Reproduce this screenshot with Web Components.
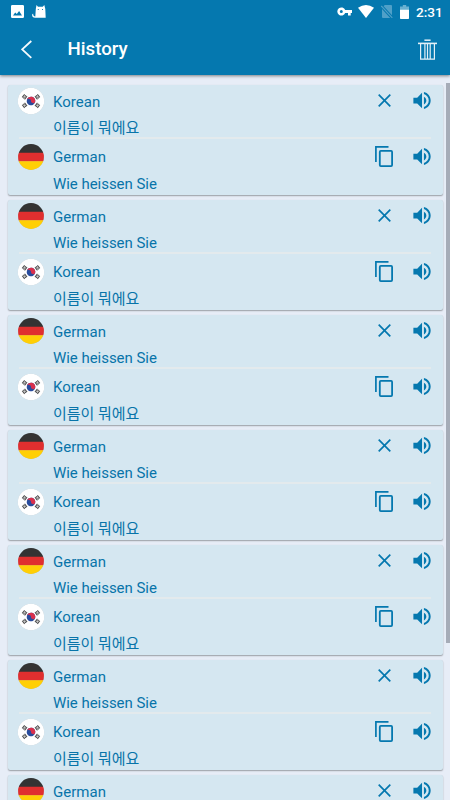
<!DOCTYPE html>
<html lang="en">
<head>
<meta charset="utf-8">
<title>History</title>
<style>
html,body{margin:0;height:100%;overflow:hidden}
body{font-family:Roboto,"Noto Sans CJK KR",sans-serif;background:#e7edf7}
</style>
</head>
<body>
<history-app></history-app>
<script>
const define = (name, html, init) => {
  const t = document.createElement('template');
  t.innerHTML = html;
  customElements.define(name, class extends HTMLElement {
    constructor() {
      super();
      this.attachShadow({mode: 'open'}).append(t.content.cloneNode(true));
    }
    connectedCallback() { if (init) init(this, this.shadowRoot); }
  });
};

const glyphs = {
  back: [11, 19, '<path d="M10.3 1 1.2 9.4l9.1 8.5" fill="none" stroke="#f4fafd" stroke-width="1.8"/>'],
  trash: [19, 21, '<g fill="none" stroke="#e3f0f7"><path d="M0 4.4h19" stroke-width="1.6"/><path d="M6.4 1.2h6.2" stroke-width="1.5"/><path d="M2.6 4.5v15.6h13.8V4.5M6.9 5v15M9.5 5v15M12.2 5v15" stroke-width="1.2"/></g>'],
  close: [13, 13, '<path d="M.7.7l11.6 11.6M12.3.7.7 12.3" fill="none" stroke="#0578af" stroke-width="1.7"/>'],
  copy: [18, 21, '<path d="M.9 16V.9h12.6" fill="none" stroke="#0578af" stroke-width="1.7"/><rect x="4.8" y="4.9" width="12.3" height="15.2" rx="1" fill="none" stroke="#0578af" stroke-width="1.8"/>'],
  sound: [18, 17, '<path transform="translate(-2.5 -3) scale(.96)" fill="#0578af" d="M3 9v6h4l5 5V4L7 9H3zm13.5 3c0-1.77-1.02-3.29-2.5-4.03v8.05c1.48-.73 2.5-2.25 2.5-4.02zM14 3.23v2.06c2.89.86 5 3.54 5 6.71s-2.11 5.85-5 6.71v2.06c4.01-.91 7-4.49 7-8.77s-2.99-7.86-7-8.77z"/>'],
  image: [13, 13, '<path fill="#fff" fill-rule="evenodd" d="M1.3 0h10.4Q13 0 13 1.3v10.4q0 1.3-1.3 1.3H1.3Q0 13 0 11.7V1.3Q0 0 1.3 0zM2 10.4h9L8.1 6.1l-2.3 3-1.6-1.7z"/>'],
  cat: [14, 13, '<path fill="#fff" fill-rule="evenodd" d="M4.5 0 6 1.8h4.7L12.3 0l1 4.1.4 8.7H3.3Q0 12.9.1 9.5l1-.9q.1 3 2.2 3L3.8 4zM5.8 4v.9h.9V4zm4.2 0v.9h.9V4z"/>'],
  key: [15, 9, '<path fill="#fff" fill-rule="evenodd" d="M8.2 3A4.1 4.1 0 1 0 8.2 6H11v2.5h2.7V6H15V3zM4.3 3a1.5 1.5 0 1 1 0 3 1.5 1.5 0 0 1 0-3z"/>'],
  wifi: [16, 13, '<path fill="#fff" d="M0 2.8Q8-2.6 16 2.8L8 13z"/>'],
  sim: [12, 13, '<path fill="#4fa0c8" d="M3.7 0H10q1 0 1 1v9.2L2.6 1.3zM1 4V12q0 1 1 1h7.2z"/><path d="M.3.9l11 12" stroke="#4fa0c8" stroke-width="1.1"/>'],
  battery: [9, 14, '<path fill="#69b0d1" d="M0 1.5h2.8V0h3.4v1.5H9V5H0z"/><path fill="#fff" d="M0 4.8h9v8.4q0 .8-.8.8H.8q-.8 0-.8-.8z"/>'],
};
define('line-icon', `<style>:host{display:block;flex:none}svg{display:block}</style>`, (el, root) => {
  const [w, h, body] = glyphs[el.getAttribute('name')];
  root.innerHTML += `<svg width="${w}" height="${h}" viewBox="0 0 ${w} ${h}">${body}</svg>`;
});

const trigram = (x, y, angle) => `<g transform="translate(${x} ${y}) rotate(${angle})" stroke="#505050" stroke-width="1.1"><path d="M-2-1.5h4M-2 0h1.7M.3 0H2M-2 1.5h4"/></g>`;
const flags = {
  Korean: `<circle cx="14" cy="14" r="13.2" fill="#fff"/>
    <g transform="rotate(15 14 14)"><circle cx="14" cy="14" r="4.3" fill="#284b9c"/><path fill="#d9304c" d="M9.7 14a4.3 4.3 0 0 1 8.6 0 2.15 1.5 0 0 1-4.3 0 2.15 1.5 0 0 0-4.3 0"/></g>
    ${trigram(7.6, 9.8, -52)}${trigram(20.4, 9.8, 52)}${trigram(7.6, 18.4, 52)}${trigram(20.4, 18.4, -52)}`,
  German: `<clipPath id="c"><circle cx="14" cy="14" r="12.9"/></clipPath><g clip-path="url(#c)"><path fill="#333" d="M0 0h28v10H0z"/><path fill="#e02f2f" d="M0 9.8h28v8.6H0z"/><path fill="#ffcf05" d="M0 18.3h28V28H0z"/></g>`,
};
define('country-flag', `<style>:host{display:block;flex:none;width:28px;height:28px}svg{display:block;overflow:visible;filter:drop-shadow(0 .8px .7px #0003)}</style>`, (el, root) => {
  root.innerHTML += `<svg width="28" height="28" viewBox="0 0 28 28">${flags[el.getAttribute('lang-name')]}</svg>`;
});

define('status-bar', `
<style>
:host{display:flex;align-items:center;height:23px;padding:0 9px 0 10.5px;color:#fff;font-size:13.6px;font-weight:500;box-sizing:border-box}
.left{display:flex;gap:8.5px;flex:1}
.right{display:flex;align-items:center}
.time{width:25px;text-align:right}
.k{margin-right:6px}.w{margin-right:7px}.s{margin-right:7px}.b{margin-right:7px}
</style>
<div class="left"><line-icon name="image"></line-icon><line-icon name="cat"></line-icon></div>
<div class="right"><line-icon class="k" name="key"></line-icon><line-icon class="w" name="wifi"></line-icon><line-icon class="s" name="sim"></line-icon><line-icon class="b" name="battery"></line-icon><span class="time"><slot></slot></span></div>`);

define('app-bar', `
<style>
:host{display:flex;align-items:center;height:52px;padding:0 13px 0 20.5px;box-sizing:border-box;color:#fff}
h1{flex:1;margin:0 0 0 36px;font-size:18.7px;line-height:24px;font-weight:500}
</style>
<line-icon name="back"></line-icon><h1><slot></slot></h1><line-icon name="trash"></line-icon>`);

define('phrase-row', `
<style>
:host{display:grid;grid-template-columns:28px 1fr 18px 18px;align-items:start;color:#0874a9;font-size:15px;box-sizing:border-box;padding:2.5px 12px 0 9.5px}
.text{padding-left:7.9px}
.name,.phrase{line-height:26px;white-space:nowrap;letter-spacing:-.03px}
.name{margin-top:1.5px;letter-spacing:.06px}
:host([slot=target]) .phrase{padding-top:.6px}
.action{height:27px;display:flex;align-items:center;justify-content:center}
.main{width:18px;margin-left:-20px}
</style>
<country-flag></country-flag>
<div class="text"><div class="name"></div><div class="phrase"><slot></slot></div></div>
<div class="action main"></div>
<div class="action"><line-icon name="sound"></line-icon></div>`, (el, root) => {
  const lang = el.getAttribute('language');
  const flag = document.createElement('country-flag');
  flag.setAttribute('lang-name', lang);
  root.querySelector('country-flag').replaceWith(flag);
  root.querySelector('.name').textContent = lang;
  const icon = document.createElement('line-icon');
  icon.setAttribute('name', el.getAttribute('action'));
  if (el.getAttribute('action') === 'close') icon.style.marginLeft = '1px';
  root.querySelector('.action').append(icon);
});

define('history-card', `
<style>
:host{display:block;height:110.5px;flex:none;background:#d5e7f1;border-radius:2px;box-shadow:0 1px 1.5px #0005,0 0 1px #0001;box-sizing:border-box}
.top{height:52.5px}
hr{height:2px;border:0;margin:0 11.5px;background:#e3eaed}
slot[name=target]{display:block;padding-top:1px}
</style>
<div class="top"><slot name="source"></slot></div><hr><slot name="target"></slot>`);

define('history-app', `
<style>
:host{display:flex;flex-direction:column;height:100vh;overflow:hidden}
header{background:#0578af;height:75px;flex:none;box-shadow:0 1px 3px #0007;z-index:1}
main{flex:1;display:flex;min-height:0;overflow:hidden}
.list{flex:1;display:flex;flex-direction:column;gap:4.5px;padding:9.5px 3.4px 0 7.5px}
.bar{width:4px;height:560px;margin-top:8px;background:#a6acb8}
</style>
<header><status-bar>2:31</status-bar><app-bar>History</app-bar></header>
<main><div class="list"></div><div class="bar"></div></main>`, (el, root) => {
  const phrases = {Korean: '이름이 뭐에요', German: 'Wie heissen Sie'};
  const row = (slot, lang, action, text = phrases[lang]) => `<phrase-row slot="${slot}" language="${lang}" action="${action}">${text}</phrase-row>`;
  const card = (a, b) => `<history-card>${row('source', a, 'close')}${row('target', b, 'copy')}</history-card>`;
  root.querySelector('.list').innerHTML = card('Korean', 'German') + card('German', 'Korean').repeat(5)
    + `<history-card>${row('source', 'German', 'close', '')}</history-card>`;
});
</script>
</body>
</html>
